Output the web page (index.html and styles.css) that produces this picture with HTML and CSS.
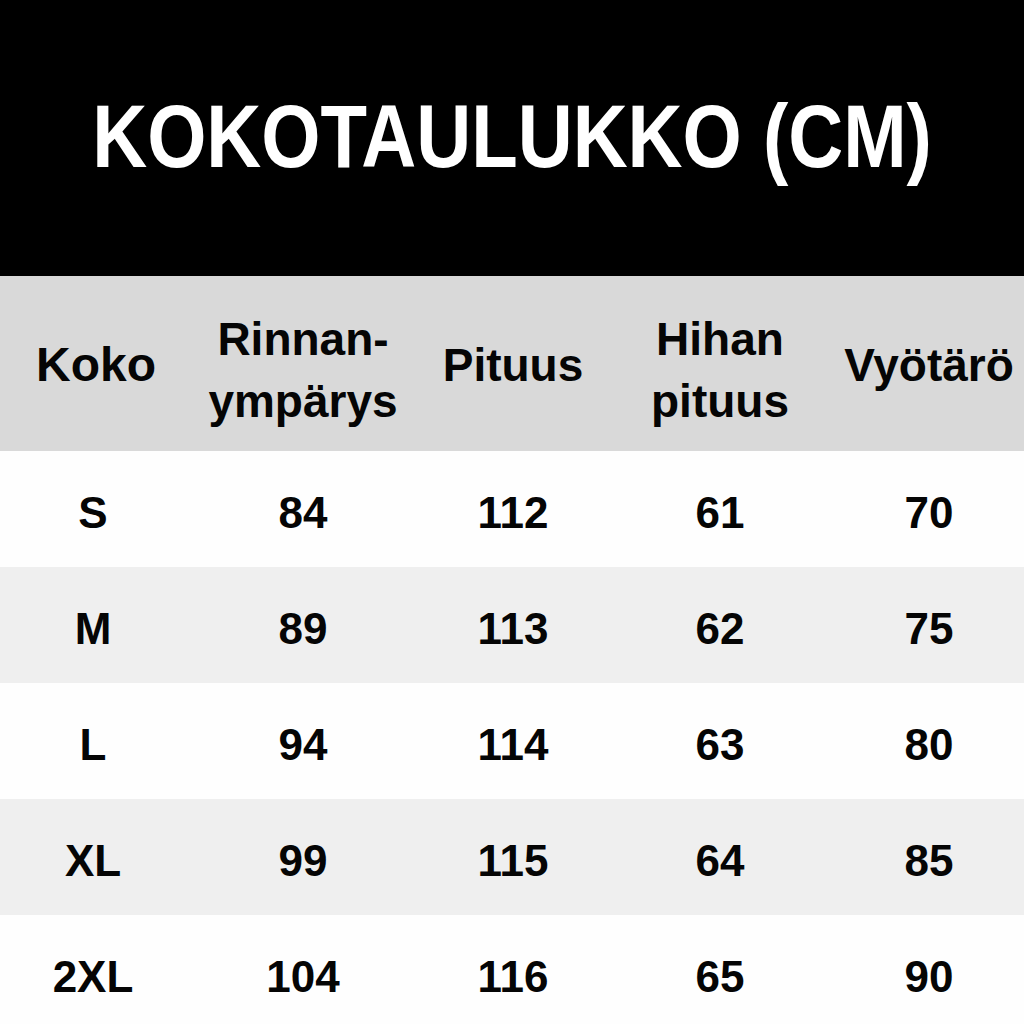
FILE: index.html
```html
<!DOCTYPE html>
<html lang="fi">
<head>
<meta charset="utf-8">
<title>Kokotaulukko</title>
<link rel="stylesheet" href="styles.css">
</head>
<body>
<div class="page">
  <header class="title-bar">
    <h1 class="title">KOKOTAULUKKO (CM)</h1>
  </header>
  <div class="row head">
    <div class="cell koko">Koko</div>
    <div class="cell two">Rinnan-<br>ympärys</div>
    <div class="cell">Pituus</div>
    <div class="cell two">Hihan<br>pituus</div>
    <div class="cell">Vyötärö</div>
  </div>
  <div class="row">
    <div class="cell">S</div><div class="cell">84</div><div class="cell">112</div><div class="cell">61</div><div class="cell">70</div>
  </div>
  <div class="row alt">
    <div class="cell">M</div><div class="cell">89</div><div class="cell">113</div><div class="cell">62</div><div class="cell">75</div>
  </div>
  <div class="row">
    <div class="cell">L</div><div class="cell">94</div><div class="cell">114</div><div class="cell">63</div><div class="cell">80</div>
  </div>
  <div class="row alt">
    <div class="cell">XL</div><div class="cell">99</div><div class="cell">115</div><div class="cell">64</div><div class="cell">85</div>
  </div>
  <div class="row">
    <div class="cell">2XL</div><div class="cell">104</div><div class="cell">116</div><div class="cell">65</div><div class="cell">90</div>
  </div>
</div>
</body>
</html>
```

FILE: styles.css
```css
html, body {
  margin: 0;
  padding: 0;
  height: 1024px;
  overflow: hidden;
  background: #fefefe;
}

.page {
  width: 1024px;
  font-family: "Liberation Sans", Arial, sans-serif;
  font-weight: 700;
  color: #050505;
}

.title-bar {
  height: 276px;
  background: #000;
  display: flex;
  align-items: center;
  justify-content: center;
}

.title {
  margin: 0;
  color: #fff;
  font-size: 89px;
  line-height: 1;
  letter-spacing: 0;
  white-space: nowrap;
  transform: scaleX(0.855);
  padding-bottom: 4px;
}

.row {
  display: grid;
  grid-template-columns: 186px 234px 186px 228px 190px;
  height: 116px;
  background: #fefefe;
  font-size: 44px;
  line-height: 1;
}

.row.alt {
  background: #efefef;
}

.row.head {
  height: 175px;
  background: #d9d9d9;
  font-size: 46px;
  line-height: 62px;
}

.cell {
  display: flex;
  align-items: center;
  justify-content: center;
  text-align: center;
  padding-top: 8px;
}

.row.head .cell {
  padding-top: 2px;
}

.row.head .cell.two {
  padding-top: 12px;
}

.row.head .koko {
  font-size: 48px;
  padding-left: 6px;
}
```
